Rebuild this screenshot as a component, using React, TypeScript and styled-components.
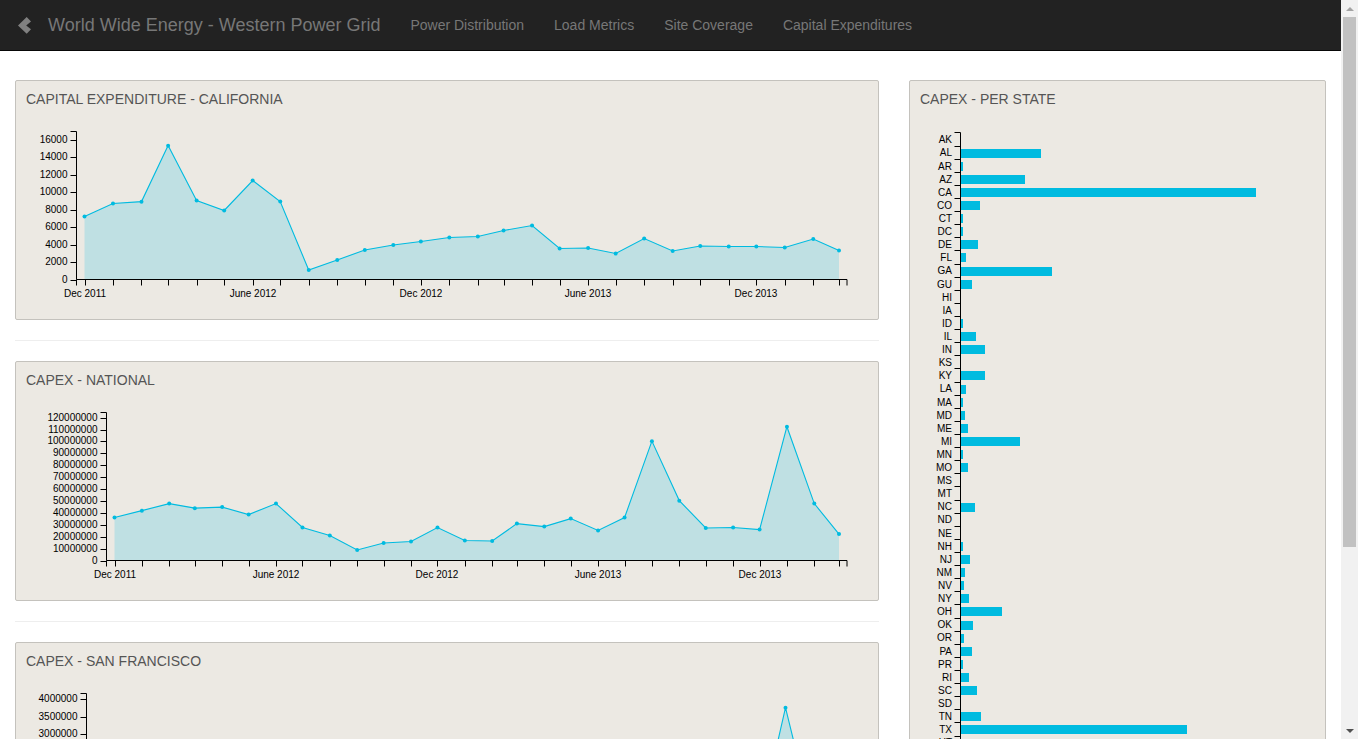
import React from 'react'
import styled, { createGlobalStyle } from 'styled-components'

const GlobalStyle = createGlobalStyle`
html, body {
  height: 100%;
  overflow: hidden;
}
body {
  margin: 0;
  background: #fff;
  font-family: "Liberation Sans", Arial, sans-serif;
  font-size: 14px;
  color: #333;
}
`

const Shell = styled.div`
  display: flex;
  height: 100vh;
`

const Viewport = styled.div`
  flex: 1;
  min-width: 0;
  overflow: hidden;
`

const ScrollRail = styled.div`
  display: flex;
  flex-direction: column;
  flex: 0 0 17px;
  background: #f1f1f1;
`

const ScrollArrow = styled.div<{ $down?: boolean }>`
  display: flex;
  flex: 0 0 17px;
  align-items: center;
  justify-content: center;
  margin-top: ${props => (props.$down ? 'auto' : '0')};

  &::before {
    content: '';
    border-left: 4px solid transparent;
    border-right: 4px solid transparent;
    border-top: ${props => (props.$down ? '4px solid #505050' : '0')};
    border-bottom: ${props => (props.$down ? '0' : '4px solid #a3a3a3')};
  }
`

const ScrollThumb = styled.div`
  flex: 0 0 530px;
  margin: 0 2px;
  background: #c1c1c1;
`

const Navbar = styled.nav`
  display: flex;
  align-items: center;
  height: 50px;
  background: #222;
  border-bottom: 1px solid #080808;
`

const Brand = styled.a`
  display: flex;
  align-items: center;
  gap: 17px;
  padding: 0 15px 0 18px;
  font-size: 18px;
  color: #777;
  white-space: nowrap;
`

const NavLinks = styled.ul`
  display: flex;
  margin: 0;
  padding: 0;
  list-style: none;
`

const NavLink = styled.li`
  padding: 0 15px;
  font-size: 14px;
  line-height: 50px;
  color: #777;
  white-space: nowrap;
`

const Page = styled.main`
  display: grid;
  grid-template-columns: 864px 417px;
  column-gap: 30px;
  padding: 29px 0 101px 15px;
`

const LeftColumn = styled.div`
  display: flex;
  flex-direction: column;
`

const Divider = styled.hr`
  width: 100%;
  margin: 20px 0;
  border: 0;
  border-top: 1px solid #eee;
`

const Card = styled.section`
  box-sizing: border-box;
  min-height: 240px;
  background: #ece9e3;
  border: 1px solid #c4c2bd;
  border-radius: 2px;
`

const CardTitle = styled.h3`
  height: 37px;
  margin: 0;
  padding: 0 10px;
  box-sizing: border-box;
  font-size: 14px;
  font-weight: 400;
  line-height: 36px;
  color: #555;
`

const ChartSvg = styled.svg`
  display: block;
`

const AxisText = styled.text`
  font-family: "Liberation Sans", Arial, sans-serif;
  font-size: 10px;
  fill: #000;
`

const CYAN = '#00bbe0'
const AREA = '#bfe0e3'

// Days from Dec 1 2011 for each monthly sample, then the end of the axis
const MONTH_LENGTHS = [31, 31, 29, 31, 30, 31, 30, 31, 31, 30, 31, 30, 31, 31, 28, 31, 30, 31, 30, 31, 31, 30, 31, 30, 31, 31, 28]
const DAYS = MONTH_LENGTHS.reduce<number[]>((acc, len) => [...acc, acc[acc.length - 1] + len], [0])
const TOTAL_DAYS = DAYS[DAYS.length - 1]

const MONTH_LABELS: Record<number, string> = {
  0: 'Dec 2011',
  6: 'June 2012',
  12: 'Dec 2012',
  18: 'June 2013',
  24: 'Dec 2013',
}

const BASELINE = 161.5
const AXIS_TOP = 13.5
const LAST_X = 823
const END_X = 831

interface AreaChartProps {
  axisX: number
  values: number[]
  maxTick: number
  tickStep: number
  span: number
}

const AreaChart = ({ axisX, values, maxTick, tickStep, span }: AreaChartProps) => {
  const firstX = axisX + 8
  const xAt = (i: number) => firstX + (DAYS[i] / TOTAL_DAYS) * (LAST_X - firstX)
  const yAt = (v: number) => BASELINE - (v / maxTick) * span

  const points = values.map((v, i) => `${xAt(i).toFixed(1)},${yAt(v).toFixed(1)}`)
  const ticks: number[] = []
  for (let t = 0; t <= maxTick; t += tickStep) ticks.push(t)

  return (
    <ChartSvg width={862} height={201}>
      <polygon
        fill={AREA}
        points={`${firstX},${BASELINE} ${points.join(' ')} ${LAST_X},${BASELINE}`}
      />
      <polyline fill="none" stroke={CYAN} strokeWidth={1.1} points={points.join(' ')} />
      {values.map((v, i) => (
        <circle key={i} cx={xAt(i)} cy={yAt(v)} r={2} fill={CYAN} />
      ))}

      <path
        d={`M${axisX - 6} ${AXIS_TOP}H${axisX}V${BASELINE}H${END_X}V${BASELINE + 6}M${axisX} ${BASELINE}V${BASELINE + 6}`}
        fill="none"
        stroke="#000"
      />
      {ticks.map(t => {
        const y = Math.round(yAt(t)) + 0.5
        return (
          <g key={t}>
            <line x1={axisX - 6} x2={axisX} y1={y} y2={y} stroke="#000" />
            <AxisText x={axisX - 9} y={y + 2.5} textAnchor="end">{t}</AxisText>
          </g>
        )
      })}
      {values.map((_, i) => {
        const x = Math.round(xAt(i)) + 0.5
        return (
          <g key={i}>
            <line x1={x} x2={x} y1={BASELINE} y2={BASELINE + 6} stroke="#000" />
            {MONTH_LABELS[i] && (
              <AxisText x={x - 0.5} y={BASELINE + 17} textAnchor="middle">{MONTH_LABELS[i]}</AxisText>
            )}
          </g>
        )
      })}
    </ChartSvg>
  )
}

const STATES: [string, number][] = [
  ['AK', 0], ['AL', 80], ['AR', 2], ['AZ', 64], ['CA', 295], ['CO', 19], ['CT', 2], ['DC', 2],
  ['DE', 17], ['FL', 5], ['GA', 91], ['GU', 11], ['HI', 0], ['IA', 0], ['ID', 2], ['IL', 15],
  ['IN', 24], ['KS', 0], ['KY', 24], ['LA', 5], ['MA', 2], ['MD', 4], ['ME', 7], ['MI', 59],
  ['MN', 2], ['MO', 7], ['MS', 0], ['MT', 0], ['NC', 14], ['ND', 0], ['NE', 0], ['NH', 2],
  ['NJ', 9], ['NM', 4], ['NV', 3], ['NY', 8], ['OH', 41], ['OK', 12], ['OR', 3], ['PA', 11],
  ['PR', 2], ['RI', 8], ['SC', 16], ['SD', 0], ['TN', 20], ['TX', 226], ['UT', 4], ['VA', 12],
  ['VT', 2], ['WA', 8], ['WI', 9], ['WV', 3], ['WY', 2],
]

const ROW_TOP = 14.5
const ROW_STEP = 13.11
const BAR_X = 50.5

const StateBars = () => {
  const bottom = ROW_TOP + STATES.length * ROW_STEP
  return (
    <ChartSvg width={415} height={761}>
      <path d={`M${BAR_X - 6} ${ROW_TOP}H${BAR_X}V${bottom}`} fill="none" stroke="#000" />
      {STATES.map(([state, width], i) => {
        const top = ROW_TOP + i * ROW_STEP
        const tickY = Math.round(top + ROW_STEP) + 0.5
        return (
          <g key={state}>
            <rect x={BAR_X + 0.5} y={Math.round(top + 3)} width={width} height={9} fill={CYAN} />
            <line x1={BAR_X - 6} x2={BAR_X} y1={tickY} y2={tickY} stroke="#000" />
            <AxisText x={BAR_X - 8.5} y={top + 10.8} textAnchor="end">{state}</AxisText>
          </g>
        )
      })}
    </ChartSvg>
  )
}

const CALIFORNIA = [
  7200, 8690, 8900, 15300, 9030, 7890, 11310, 8910, 1090, 2230, 3370, 3940, 4340, 4800,
  4910, 5600, 6170, 3540, 3600, 2970, 4690, 3260, 3830, 3770, 3770, 3660, 4630, 3310,
]

const NATIONAL = [
  36.1, 41.9, 47.8, 44, 44.9, 38.6, 47.8, 27.7, 21, 8.8, 14.7, 16, 27.7, 16.8,
  16.4, 31, 28.5, 35.2, 25.2, 36.1, 100.3, 50.3, 27.3, 27.7, 26, 112.4, 47.8, 22.2,
].map(v => v * 1000000)

const SAN_FRANCISCO = [
  620000, 480000, 910000, 350000, 420000, 760000, 530000, 880000, 240000, 310000, 450000, 390000, 570000, 660000,
  280000, 430000, 720000, 340000, 510000, 290000, 840000, 610000, 370000, 460000, 300000, 3750000, 530000, 410000,
]

const App = () => (
  <>
    <GlobalStyle />
    <Shell>
      <Viewport>
        <Navbar>
          <Brand>
            <svg width="13" height="17" viewBox="0 0 13 17" fill="#808080">
              <polygon points="8.7,0 13,4.6 8.2,8.4 13,12.2 8.7,16.8 0,8.4" />
            </svg>
            World Wide Energy - Western Power Grid
          </Brand>
          <NavLinks>
            <NavLink>Power Distribution</NavLink>
            <NavLink>Load Metrics</NavLink>
            <NavLink>Site Coverage</NavLink>
            <NavLink>Capital Expenditures</NavLink>
          </NavLinks>
        </Navbar>
        <Page>
          <LeftColumn>
            <Card>
              <CardTitle>CAPITAL EXPENDITURE - CALIFORNIA</CardTitle>
              <AreaChart axisX={60.5} values={CALIFORNIA} maxTick={16000} tickStep={2000} span={140} />
            </Card>
            <Divider />
            <Card>
              <CardTitle>CAPEX - NATIONAL</CardTitle>
              <AreaChart axisX={90.5} values={NATIONAL} maxTick={120000000} tickStep={10000000} span={142.8} />
            </Card>
            <Divider />
            <Card>
              <CardTitle>CAPEX - SAN FRANCISCO</CardTitle>
              <AreaChart axisX={70.5} values={SAN_FRANCISCO} maxTick={4000000} tickStep={500000} span={142.8} />
            </Card>
          </LeftColumn>
          <Card>
            <CardTitle>CAPEX - PER STATE</CardTitle>
            <StateBars />
          </Card>
        </Page>
      </Viewport>
      <ScrollRail aria-hidden="true">
        <ScrollArrow />
        <ScrollThumb />
        <ScrollArrow $down />
      </ScrollRail>
    </Shell>
  </>
)

export default App
